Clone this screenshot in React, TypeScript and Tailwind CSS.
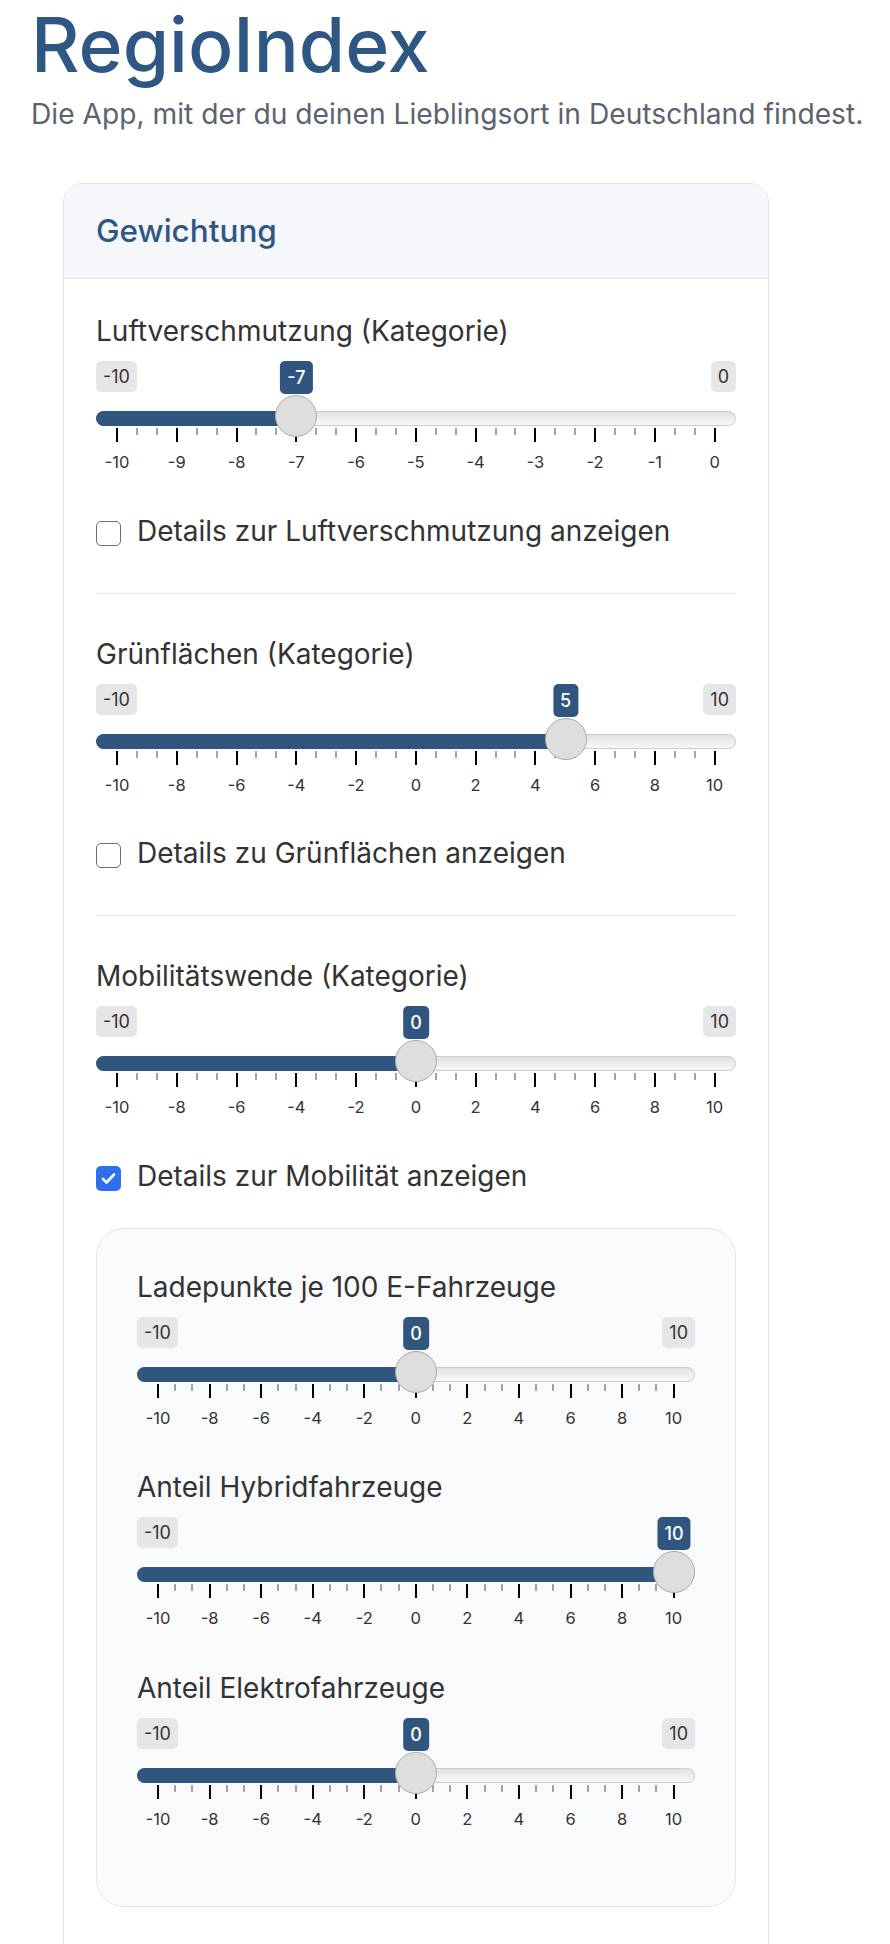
import React from "react";

type SliderProps = {
  label: string;
  min: number;
  max: number;
  value: number;
  step: number;
};

const font = { fontFamily: "Inter, 'Noto Sans', sans-serif" };

function Ticks({ min, max, step }: { min: number; max: number; step: number }) {
  const items: { major: boolean; label?: number }[] = [];
  for (let v = min; v <= max; v += step) {
    items.push({ major: true, label: v });
    if (v < max) {
      items.push({ major: false });
      items.push({ major: false });
    }
  }
  return (
    <div className="mx-[21px] mt-[2px] flex justify-between">
      {items.map((t, i) => (
        <div key={i} className="flex w-0 flex-col items-center">
          {t.major ? (
            <>
              <div className="h-[14px] w-[2px] shrink-0 bg-black" />
              <span className="mt-[12px] whitespace-nowrap text-[16.5px] leading-none text-[#333]">
                {t.label}
              </span>
            </>
          ) : (
            <div className="h-[7px] w-[2px] shrink-0 bg-[#a3a3a3]" />
          )}
        </div>
      ))}
    </div>
  );
}

function Slider({ label, min, max, value, step }: SliderProps) {
  const p = (value - min) / (max - min);
  const pos = `calc(21px + ${p} * (100% - 42px))`;
  return (
    <div>
      <div className="text-[28px] leading-[40px] text-[#333]">{label}</div>

      <div className="relative mt-[10px] flex h-[31px] justify-between">
        <span className={`h-[31px] rounded-[5px] bg-[#e6e6e6] px-[7px] text-[18px] leading-[31px] text-[#333] ${p < 0.1 ? "invisible" : ""}`}>
          {min}
        </span>
        <span className={`h-[31px] rounded-[5px] bg-[#e6e6e6] px-[7px] text-[18px] leading-[31px] text-[#333] ${p > 0.9 ? "invisible" : ""}`}>
          {max}
        </span>
        <span
          className="absolute top-0 h-[33px] -translate-x-1/2 rounded-[5px] bg-[#30567f] px-[7px] text-[18px] font-medium leading-[33px] text-white"
          style={{ left: pos }}
        >
          {value}
        </span>
      </div>

      <div className="relative mt-[19px] h-[15px]">
        <div className="absolute inset-0 rounded-full border border-[#cccccc] bg-linear-to-b from-[#e2e2e2] to-[#f8f8f8]" />
        <div className="absolute left-0 top-0 h-full rounded-l-full bg-[#30567f]" style={{ width: pos }} />
        <div
          className="absolute top-[-16px] h-[42px] w-[42px] -translate-x-1/2 rounded-full border-[1.5px] border-[#ababab] bg-[#dedede]"
          style={{ left: pos }}
        />
      </div>

      <Ticks min={min} max={max} step={step} />
    </div>
  );
}

function Checkbox({ label, checked }: { label: string; checked?: boolean }) {
  return (
    <label className="mt-[40px] flex items-start gap-[16px] text-[28px] leading-[40px] text-[#333]">
      {checked ? (
        <span className="mt-[10px] flex h-[25px] w-[25px] shrink-0 items-center justify-center rounded-[5px] bg-[#2f6fec]">
          <svg viewBox="0 0 24 24" className="h-[19px] w-[19px]" fill="none" stroke="white" strokeWidth="3.4" strokeLinecap="round" strokeLinejoin="round">
            <path d="M5 12.5l4.5 4.5L19 7" />
          </svg>
        </span>
      ) : (
        <span className="mt-[10px] h-[25px] w-[25px] shrink-0 rounded-[5px] border-[1.5px] border-[#6f6f6f] bg-white" />
      )}
      <span>{label}</span>
    </label>
  );
}

export default function App() {
  return (
    <div className="min-h-screen bg-white pl-[31px] pb-[40px]" style={font}>
      <h1 className="pt-[2px] text-[75px] font-medium leading-[86px] text-[#2f5784]">
        RegioIndex
      </h1>
      <p className="mt-[7px] text-[28.2px] leading-[39px] text-[#5c636e]">
        Die App, mit der du deinen Lieblingsort in Deutschland findest.
      </p>

      <section className="ml-[32px] mt-[49px] w-[706px] overflow-hidden rounded-[20px] border border-[#dfe2e6]">
        <header className="border-b border-[#dfe2e6] bg-[#f5f7fa] px-[32px] py-[29px]">
          <h2 className="text-[31.5px] font-medium leading-[36px] text-[#2f5784]">Gewichtung</h2>
        </header>

        <div className="px-[32px] pb-[80px] pt-[32px]">
          <Slider label="Luftverschmutzung (Kategorie)" min={-10} max={0} value={-7} step={1} />
          <Checkbox label="Details zur Luftverschmutzung anzeigen" />
          <hr className="mb-[40px] mt-[42px] border-t border-[#e5e7eb]" />

          <Slider label="Grünflächen (Kategorie)" min={-10} max={10} value={5} step={2} />
          <Checkbox label="Details zu Grünflächen anzeigen" />
          <hr className="mb-[40px] mt-[42px] border-t border-[#e5e7eb]" />

          <Slider label="Mobilitätswende (Kategorie)" min={-10} max={10} value={0} step={2} />
          <Checkbox label="Details zur Mobilität anzeigen" checked />

          <div className="mt-[32px] flex flex-col gap-[41px] rounded-[28px] border border-[#e2e5e9] bg-[#f9fafc] px-[40px] pb-[79px] pt-[38px]">
            <Slider label="Ladepunkte je 100 E-Fahrzeuge" min={-10} max={10} value={0} step={2} />
            <Slider label="Anteil Hybridfahrzeuge" min={-10} max={10} value={10} step={2} />
            <Slider label="Anteil Elektrofahrzeuge" min={-10} max={10} value={0} step={2} />
          </div>
        </div>
      </section>
    </div>
  );
}
